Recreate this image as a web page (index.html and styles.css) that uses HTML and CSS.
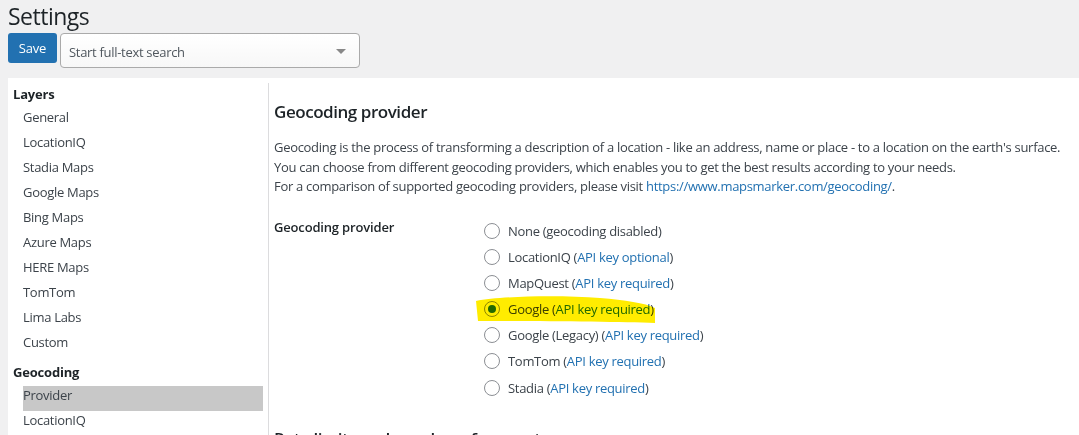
FILE: index.html
```html
<!DOCTYPE html>
<html lang="en">
<head>
<meta charset="utf-8">
<title>Settings</title>
<link rel="stylesheet" href="styles.css">
</head>
<body>
<div class="page">
  <h1 class="title">Settings</h1>
  <div class="toolbar">
    <button class="btn-save">Save</button>
    <div class="search">
      <span class="search-text">Start full-text search</span>
      <span class="caret"></span>
    </div>
  </div>
  <div class="panel">
    <nav class="sidebar">
      <div class="group-title">Layers</div>
      <ul class="nav-list">
        <li>General</li>
        <li>LocationIQ</li>
        <li>Stadia Maps</li>
        <li>Google Maps</li>
        <li>Bing Maps</li>
        <li>Azure Maps</li>
        <li>HERE Maps</li>
        <li>TomTom</li>
        <li>Lima Labs</li>
        <li>Custom</li>
      </ul>
      <div class="group-title group-second">Geocoding</div>
      <ul class="nav-list nav-list-tight">
        <li class="active">Provider</li>
        <li>LocationIQ</li>
      </ul>
    </nav>
    <main class="content">
      <h2 class="section-title">Geocoding provider</h2>
      <p class="intro">Geocoding is the process of transforming a description of a location - like an address, name or place - to a location on the earth's surface.<br>You can choose from different geocoding providers, which enables you to get the best results according to your needs.<br>For a comparison of supported geocoding providers, please visit <a href="#">https://www.mapsmarker.com/geocoding/</a>.</p>
      <div class="form-row">
        <div class="form-label">Geocoding provider</div>
        <ul class="radio-list">
          <li><span class="radio"></span><span>None (geocoding disabled)</span></li>
          <li><span class="radio"></span><span>LocationIQ (<a href="#">API key optional</a>)</span></li>
          <li><span class="radio"></span><span>MapQuest (<a href="#">API key required</a>)</span></li>
          <li><span class="radio checked"></span><span>Google (<a href="#">API key required</a>)</span></li>
          <li><span class="radio"></span><span>Google (Legacy) (<a href="#">API key required</a>)</span></li>
          <li><span class="radio"></span><span>TomTom (<a href="#">API key required</a>)</span></li>
          <li><span class="radio"></span><span>Stadia (<a href="#">API key required</a>)</span></li>
        </ul>
      </div>
      <h2 class="section-title next">Rate limits and number of requests</h2>
    </main>
  </div>
</div>
<svg class="marker" width="1079" height="435" viewBox="0 0 1079 435" aria-hidden="true">
  <path d="M476 301 C500 296 560 295 600 298 C625 300 645 303 655 308 L655 323 C620 322 540 321 478 321 Z" fill="#ffec00"/>
</svg>
</body>
</html>
```

FILE: styles.css
```css
* { box-sizing: border-box; }
html, body { margin: 0; padding: 0; }
body {
  background: #f0f0f1;
  font-family: "Open Sans", "Noto Sans", sans-serif;
  font-size: 13px;
  letter-spacing: -0.3px;
  color: #3c434a;
  overflow: hidden;
  height: 435px;
  position: relative;
}
a { color: #2271b1; text-decoration: none; }
ul { list-style: none; margin: 0; padding: 0; }

.page { padding-left: 8px; }

.title {
  margin: 0;
  padding-top: 1px;
  font-size: 23px;
  font-weight: 400;
  letter-spacing: -0.5px;
  line-height: 31px;
  color: #1d2327;
}

.toolbar {
  display: flex;
  align-items: flex-start;
  gap: 3px;
  margin-top: 1px;
}
.btn-save {
  width: 49px;
  height: 30px;
  border: none;
  border-radius: 3px;
  background: #2271b1;
  color: #fff;
  font-family: inherit;
  font-size: 13px;
  letter-spacing: -0.2px;
  padding: 0;
}
.search {
  width: 300px;
  height: 35px;
  background: linear-gradient(#ffffff, #f7f7f7);
  border: 1px solid #aaaaaa;
  border-radius: 4px;
  display: flex;
  align-items: center;
  justify-content: space-between;
  padding: 2px 13px 0 8px;
  color: #50575e;
}
.caret {
  width: 0; height: 0;
  border-left: 5px solid transparent;
  border-right: 5px solid transparent;
  border-top: 5px solid #888;
}

.panel {
  margin-top: 10px;
  background: #fff;
  display: flex;
  height: 400px;
}
.sidebar {
  width: 260px;
  padding: 6px 5px 0 0;
  flex: none;
}
.group-title {
  height: 21px;
  line-height: 21px;
  padding-left: 5px;
  font-weight: 700;
  letter-spacing: -0.2px;
  color: #1d2327;
}
.group-second { margin-top: 7px; margin-bottom: 3px; }
.nav-list li {
  margin-left: 15px;
  height: 25px;
  line-height: 24px;
  color: #3c434a;
}
.nav-list-tight li { line-height: 19px; }
.nav-list li.active { background: #c8c8c8; }

.content {
  flex: 1;
  margin-top: 5px;
  border-left: 1px solid #dcdcde;
  padding-left: 5px;
}
.section-title {
  margin: 18px 0 0;
  font-size: 17px;
  font-weight: 600;
  letter-spacing: -0.45px;
  line-height: 22px;
  color: #1d2327;
}
.intro {
  margin: 15px 0 0;
  line-height: 19.5px;
}
.form-row {
  display: flex;
  margin-top: 21px;
}
.form-label {
  width: 210px;
  flex: none;
  font-weight: 600;
  letter-spacing: -0.17px;
  color: #1d2327;
  line-height: 19px;
}
.radio-list li {
  height: 26.17px;
  display: flex;
  align-items: center;
  gap: 8px;
}
.radio {
  width: 16px;
  height: 16px;
  border: 1px solid #8c8f94;
  border-radius: 50%;
  background: #fff;
  display: flex;
  align-items: center;
  justify-content: center;
}
.radio.checked::after {
  content: "";
  width: 8px;
  height: 8px;
  border-radius: 50%;
  background: #2271b1;
}
.next { margin-top: 27px; }

.marker {
  position: absolute;
  left: 0;
  top: 0;
  pointer-events: none;
  mix-blend-mode: multiply;
}
```
